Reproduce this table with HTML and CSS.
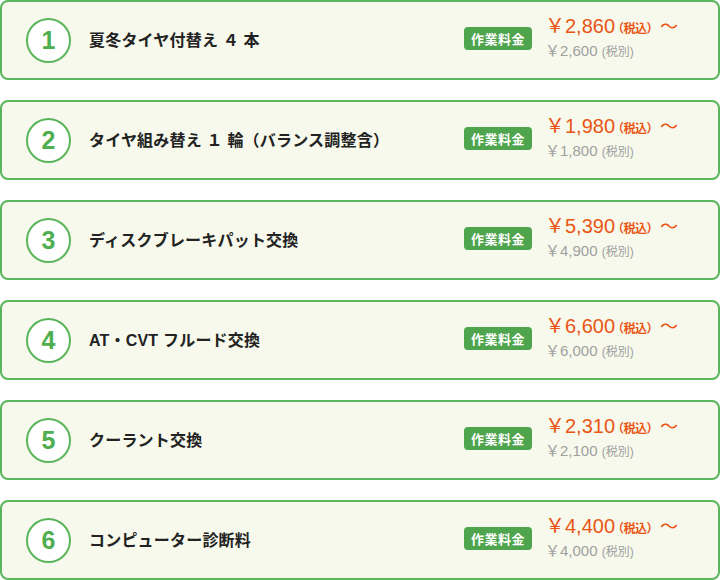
FILE: index.html
```html
<!DOCTYPE html>
<html lang="ja">
<head>
<meta charset="utf-8">
<link rel="stylesheet" href="styles.css">
</head>
<body>
<ul class="list">
  <li class="card"><span class="num">1</span><span class="title">夏冬タイヤ付替え ４ 本</span><span class="badge">作業料金</span><div class="price"><div class="inc">￥2,860<small>（税込）</small><span class="tilde">〜</span></div><div class="exc">￥2,600 <small>(税別)</small></div></div></li>
  <li class="card"><span class="num">2</span><span class="title">タイヤ組み替え １ 輪（バランス調整含）</span><span class="badge">作業料金</span><div class="price"><div class="inc">￥1,980<small>（税込）</small><span class="tilde">〜</span></div><div class="exc">￥1,800 <small>(税別)</small></div></div></li>
  <li class="card"><span class="num">3</span><span class="title">ディスクブレーキパット交換</span><span class="badge">作業料金</span><div class="price"><div class="inc">￥5,390<small>（税込）</small><span class="tilde">〜</span></div><div class="exc">￥4,900 <small>(税別)</small></div></div></li>
  <li class="card"><span class="num">4</span><span class="title">AT・CVT フルード交換</span><span class="badge">作業料金</span><div class="price"><div class="inc">￥6,600<small>（税込）</small><span class="tilde">〜</span></div><div class="exc">￥6,000 <small>(税別)</small></div></div></li>
  <li class="card"><span class="num">5</span><span class="title">クーラント交換</span><span class="badge">作業料金</span><div class="price"><div class="inc">￥2,310<small>（税込）</small><span class="tilde">〜</span></div><div class="exc">￥2,100 <small>(税別)</small></div></div></li>
  <li class="card"><span class="num">6</span><span class="title">コンピューター診断料</span><span class="badge">作業料金</span><div class="price"><div class="inc">￥4,400<small>（税込）</small><span class="tilde">〜</span></div><div class="exc">￥4,000 <small>(税別)</small></div></div></li>
</ul>
</body>
</html>
```
FILE: styles.css
```css
html, body {
  margin: 0;
  padding: 0;
  background: #fff;
}
body {
  font-family: "Liberation Sans", "Noto Sans CJK JP", sans-serif;
  width: 720px;
}
.list {
  list-style: none;
  margin: 0;
  padding: 0;
  display: flex;
  flex-direction: column;
  gap: 20px;
}
.card {
  box-sizing: border-box;
  height: 80px;
  border: 2px solid #5bb55a;
  border-radius: 8px;
  background: #f6f9eb;
  display: flex;
  align-items: center;
  padding-left: 24px;
  padding-bottom: 3px;
}
.num {
  box-sizing: border-box;
  width: 45px;
  height: 45px;
  border: 2px solid #5bb55a;
  border-radius: 50%;
  background: #fff;
  color: #4fae4f;
  font-weight: bold;
  font-size: 25px;
  display: flex;
  align-items: center;
  justify-content: center;
  flex: none;
  margin-top: 3px;
}
.title {
  margin-left: 18px;
  font-size: 16px;
  font-weight: bold;
  color: #222;
  flex: 1;
  letter-spacing: 0.2px;
}
.badge {
  flex: none;
  width: 68px;
  height: 23px;
  box-sizing: border-box;
  background: #4fa44e;
  color: #fff;
  font-size: 13px;
  font-weight: bold;
  border-radius: 4px;
  display: flex;
  align-items: center;
  justify-content: center;
  letter-spacing: 0.5px;
}
.price {
  width: 173px;
  flex: none;
  margin-left: 13px;
  display: flex;
  flex-direction: column;
  gap: 2px;
}
.inc {
  color: #ea5514;
  font-size: 20px;
  line-height: 20px;
  white-space: nowrap;
}
.inc small {
  font-size: 12px;
  font-weight: bold;
  letter-spacing: -0.5px;
  margin-left: -3px;
}
.tilde {
  font-size: 18px;
  margin-left: 2px;
}
.exc {
  color: #a0a0a0;
  font-size: 15px;
  line-height: 20px;
  white-space: nowrap;
}
.exc small {
  font-size: 12px;
}
```
